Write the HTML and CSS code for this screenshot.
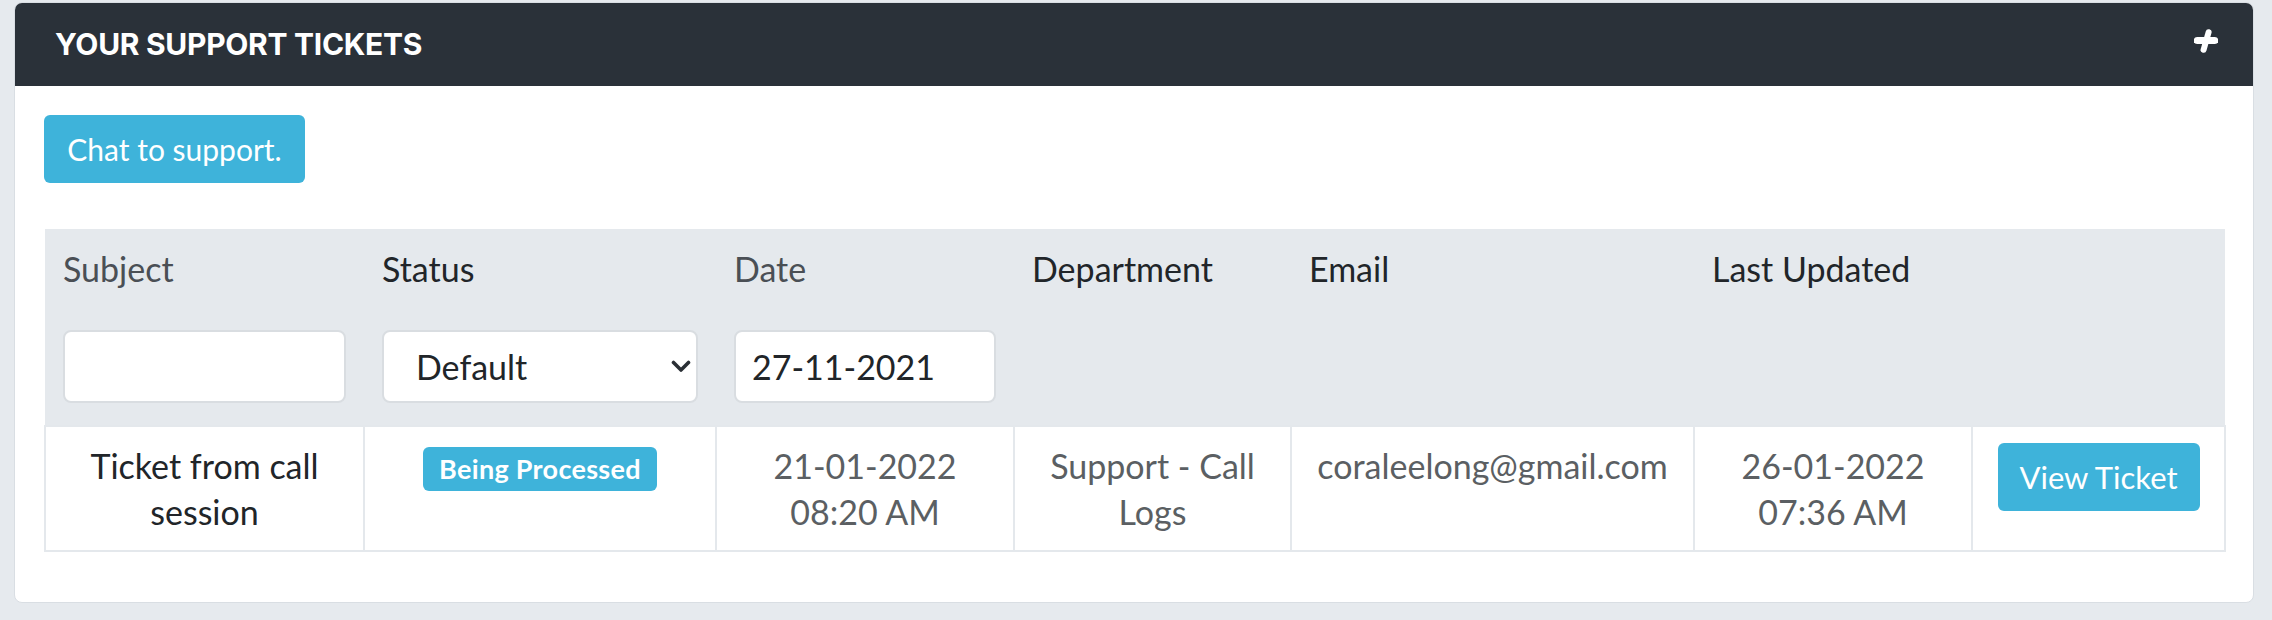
FILE: index.html
```html
<!DOCTYPE html>
<html lang="en">
<head>
<meta charset="utf-8">
<title>Your Support Tickets</title>
<link rel="stylesheet" href="styles.css">
</head>
<body>
<div class="page">
  <section class="card">
    <header class="card-header">
      <h2 class="card-title">YOUR SUPPORT TICKETS</h2>
      <svg class="plus" width="24" height="24" viewBox="0 0 24 24" aria-hidden="true">
        <path d="M3.2 11.5 H20.8" stroke="#fff" stroke-width="7" stroke-linecap="round"/>
        <path d="M14.6 3.2 L9.6 20.8" stroke="#fff" stroke-width="6" stroke-linecap="round"/>
      </svg>
    </header>
    <div class="card-body">
      <button class="btn btn-info chat-btn" type="button">Chat to support.</button>
      <table class="tickets">
        <colgroup>
          <col class="c1"><col class="c2"><col class="c3"><col class="c4"><col class="c5"><col class="c6"><col class="c7">
        </colgroup>
        <thead>
          <tr class="label-row">
            <th class="muted">Subject</th>
            <th>Status</th>
            <th class="muted">Date</th>
            <th>Department</th>
            <th>Email</th>
            <th>Last Updated</th>
            <th></th>
          </tr>
          <tr class="filter-row">
            <th><input class="field" type="text" value=""></th>
            <th>
              <div class="select-wrap">
                <select class="field select">
                  <option>Default</option>
                </select>
                <svg class="chevron" width="20" height="13" viewBox="0 0 20 13" aria-hidden="true">
                  <path d="M2.5 2.5 L10 10 L17.5 2.5" fill="none" stroke="#2a2f35" stroke-width="3.6" stroke-linecap="round" stroke-linejoin="round"/>
                </svg>
              </div>
            </th>
            <th><input class="field date" type="text" value="27-11-2021"></th>
            <th></th><th></th><th></th><th></th>
          </tr>
        </thead>
        <tbody>
          <tr>
            <td class="dark">Ticket from call session</td>
            <td><span class="badge">Being Processed</span></td>
            <td>21-01-2022<br>08:20 AM</td>
            <td>Support - Call Logs</td>
            <td>coraleelong@gmail.com</td>
            <td>26-01-2022<br>07:36 AM</td>
            <td><a class="btn btn-info view-btn" href="#">View Ticket</a></td>
          </tr>
        </tbody>
      </table>
    </div>
  </section>
</div>
</body>
</html>
```

FILE: styles.css
```css
* { box-sizing: border-box; }

html, body {
  margin: 0;
  background: #e6eaee;
}

body {
  font-family: "Lato", "Open Sans", sans-serif;
  color: #212529;
}

.page {
  padding: 2px 18px 0 14px;
}

.card {
  background: #fff;
  border: 1px solid #d9dee3;
  border-radius: 8px;
  overflow: hidden;
}

.card-header {
  height: 84px;
  margin: -1px -1px 0 -1px;
  background: #2a3139;
  display: flex;
  align-items: center;
  justify-content: space-between;
  padding: 0 36px 0 41px;
}

.card-title {
  margin: 0;
  color: #fff;
  font-family: "Inter", "Open Sans", sans-serif;
  font-weight: 700;
  font-size: 30px;
  letter-spacing: -0.3px;
}

.plus {
  display: block;
  margin-bottom: 6px;
}

.card-body {
  padding: 29px 29px 50px 29px;
}

.btn {
  display: inline-block;
  border: 0;
  border-radius: 6px;
  background: #3eb3da;
  color: #fff;
  font-family: "Lato", "Open Sans", sans-serif;
  text-decoration: none;
  cursor: pointer;
}

.chat-btn {
  height: 68px;
  width: 261px;
  font-size: 30px;
  padding: 0;
}

.tickets {
  margin-top: 46px;
  width: 2180px;
  border-collapse: collapse;
  table-layout: fixed;
  font-size: 34px;
}

.c1 { width: 319px; }
.c2 { width: 352px; }
.c3 { width: 298px; }
.c4 { width: 277px; }
.c5 { width: 403px; }
.c6 { width: 278px; }
.c7 { width: 253px; }

thead {
  background: #e5e9ed;
}

.label-row th {
  text-align: left;
  font-weight: 400;
  line-height: 46px;
  padding: 17px 18px 17px 18px;
  color: #212529;
  white-space: nowrap;
}

.label-row th.muted {
  color: #4a4f55;
}

.filter-row th {
  padding: 21px 18px 22px 18px;
  text-align: left;
  font-weight: 400;
}

.field {
  display: block;
  width: 100%;
  height: 73px;
  border: 2px solid #d9dde1;
  border-radius: 8px;
  background: #fff;
  font-family: "Lato", "Open Sans", sans-serif;
  font-size: 34px;
  color: #212529;
  padding: 0 16px;
  outline: none;
}

.select-wrap {
  position: relative;
}

.select {
  appearance: none;
  -webkit-appearance: none;
  padding-left: 32px;
}

.chevron {
  position: absolute;
  right: 7px;
  top: 30px;
}

tbody td {
  border: 2px solid #e4e8ec;
  text-align: center;
  vertical-align: top;
  line-height: 46px;
  padding: 16px 16px 15px 16px;
  color: #5b5f63;
}

tbody td.dark {
  color: #212529;
}

.badge {
  display: inline-block;
  vertical-align: top;
  margin-top: 4px;
  height: 44px;
  line-height: 44px;
  padding: 0 16px;
  border-radius: 6px;
  background: #3eb3da;
  color: #fff;
  font-weight: 700;
  font-size: 27px;
  letter-spacing: 0.3px;
}

.view-btn {
  vertical-align: top;
  height: 68px;
  width: 202px;
  line-height: 68px;
  font-size: 31px;
}
```
